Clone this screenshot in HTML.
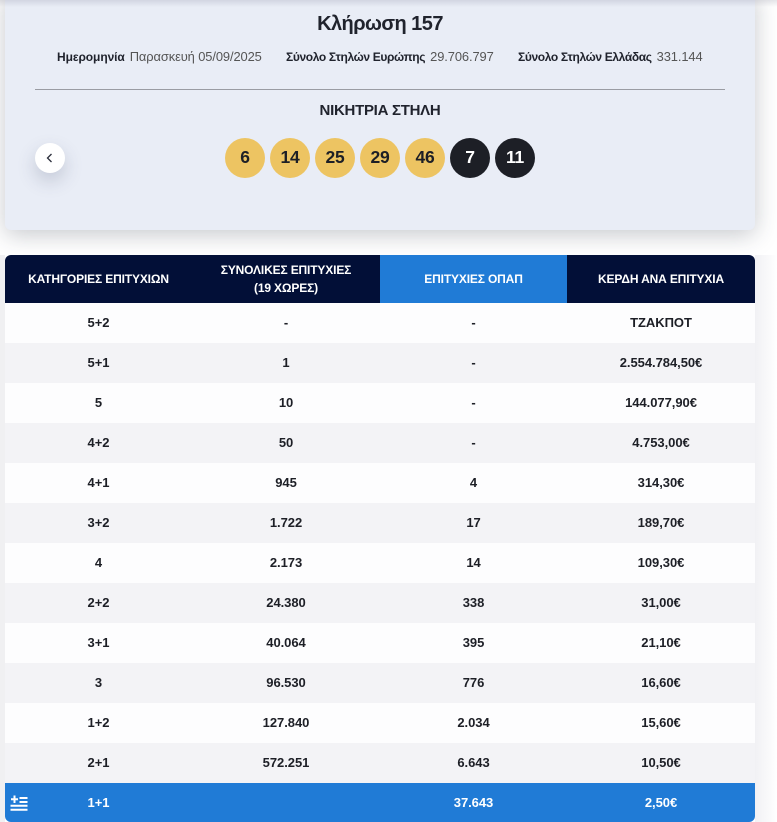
<!DOCTYPE html>
<html lang="el">
<head>
<meta charset="utf-8">
<title>Κλήρωση 157</title>
<style>
html,body{margin:0;padding:0;background:#fff;}
body{width:777px;height:822px;overflow:hidden;position:relative;font-family:"Liberation Sans",Arial,sans-serif;color:#1f2129;}
.card{position:absolute;left:5px;top:-10px;width:750px;height:240px;background:#e9edf6;border-radius:6px;box-shadow:0 5px 24px rgba(40,45,60,.26);}
.topfade{position:absolute;left:0;top:0;width:777px;height:7px;background:linear-gradient(180deg,rgba(70,70,100,.14),rgba(70,70,100,0));}
.abs{position:absolute;white-space:nowrap;}
h1{position:absolute;left:5px;width:750px;top:12px;margin:0;text-align:center;font-size:20px;line-height:24px;font-weight:700;color:#20232d;letter-spacing:-.55px;}
.meta{top:49px;font-size:12.9px;line-height:16px;color:#555;letter-spacing:-.1px;}
.meta b{color:#20232d;margin-right:5px;font-size:12px;letter-spacing:-.36px;}
.rule{position:absolute;left:35px;top:89px;width:690px;height:1px;background:#9a9ca3;}
h2{position:absolute;left:5px;width:750px;top:102px;margin:0;text-align:center;font-size:15px;line-height:18px;font-weight:700;color:#20232d;letter-spacing:-.28px;}
.ball{position:absolute;top:138px;width:40px;height:40px;border-radius:50%;text-align:center;line-height:39px;font-size:17.5px;font-weight:700;background:#edc462;color:#1d1f26;letter-spacing:-.2px;}
.ball.k{background:#1d1f26;color:#fff;}
.back{position:absolute;left:35px;top:143px;width:30px;height:30px;border-radius:50%;background:#fff;box-shadow:0 8px 18px rgba(60,70,100,.22);}
.tblwrap{position:absolute;left:5px;top:255px;width:750px;height:567px;border-radius:6px;overflow:hidden;}
.shade{position:absolute;left:755px;top:255px;width:22px;height:567px;background:linear-gradient(90deg,#f1f1f4,#fbfbfc 75%,#fff);}
.shadel{position:absolute;left:0;top:255px;width:5px;height:567px;background:#f0f0f2;}
table{border-collapse:collapse;table-layout:fixed;width:750px;}
th{height:48px;padding:0;background:#020f37;color:#fff;font-size:12px;line-height:18px;font-weight:700;text-align:center;letter-spacing:-.15px;}
th.o{background:#207bd6;}
td{box-sizing:border-box;height:40px;padding:0 0 2px;text-align:center;font-size:13px;font-weight:700;color:#1d1f26;background:#fdfdfe;letter-spacing:-.05px;}
tr.g td{background:#f3f3f6;}
tr.t td{background:#207bd6;color:#fff;height:39px;padding:0;}
.flag{position:absolute;left:10px;top:795px;width:18px;height:16px;}
</style>
</head>
<body>
<div class="card"></div>
<div class="topfade"></div>
<h1>Κλήρωση 157</h1>
<div class="abs meta" style="left:57px"><b style="letter-spacing:-.08px">Ημερομηνία</b>Παρασκευή 05/09/2025</div>
<div class="abs meta" style="left:286px"><b>Σύνολο Στηλών Ευρώπης</b>29.706.797</div>
<div class="abs meta" style="left:518px"><b>Σύνολο Στηλών Ελλάδας</b>331.144</div>
<div class="rule"></div>
<h2>ΝΙΚΗΤΡΙΑ ΣΤΗΛΗ</h2>
<div class="back"><svg width="30" height="30" viewBox="0 0 30 30"><path d="M16.5 11 L12.5 15 L16.5 19" fill="none" stroke="#2a2d3a" stroke-width="1.3"/></svg></div>
<div class="ball" style="left:225px">6</div>
<div class="ball" style="left:270px">14</div>
<div class="ball" style="left:315px">25</div>
<div class="ball" style="left:360px">29</div>
<div class="ball" style="left:405px">46</div>
<div class="ball k" style="left:450px">7</div>
<div class="ball k" style="left:495px">11</div>

<div class="shadel"></div>
<div class="shade"></div>
<div class="tblwrap">
<table>
<colgroup><col style="width:187px"><col style="width:188px"><col style="width:187px"><col style="width:188px"></colgroup>
<tr><th>ΚΑΤΗΓΟΡΙΕΣ ΕΠΙΤΥΧΙΩΝ</th><th>ΣΥΝΟΛΙΚΕΣ ΕΠΙΤΥΧΙΕΣ<br>(19 ΧΩΡΕΣ)</th><th class="o">ΕΠΙΤΥΧΙΕΣ ΟΠΑΠ</th><th>ΚΕΡΔΗ ΑΝΑ ΕΠΙΤΥΧΙΑ</th></tr>
<tr><td>5+2</td><td>-</td><td>-</td><td>ΤΖΑΚΠΟΤ</td></tr>
<tr class="g"><td>5+1</td><td>1</td><td>-</td><td>2.554.784,50€</td></tr>
<tr><td>5</td><td>10</td><td>-</td><td>144.077,90€</td></tr>
<tr class="g"><td>4+2</td><td>50</td><td>-</td><td>4.753,00€</td></tr>
<tr><td>4+1</td><td>945</td><td>4</td><td>314,30€</td></tr>
<tr class="g"><td>3+2</td><td>1.722</td><td>17</td><td>189,70€</td></tr>
<tr><td>4</td><td>2.173</td><td>14</td><td>109,30€</td></tr>
<tr class="g"><td>2+2</td><td>24.380</td><td>338</td><td>31,00€</td></tr>
<tr><td>3+1</td><td>40.064</td><td>395</td><td>21,10€</td></tr>
<tr class="g"><td>3</td><td>96.530</td><td>776</td><td>16,60€</td></tr>
<tr><td>1+2</td><td>127.840</td><td>2.034</td><td>15,60€</td></tr>
<tr class="g"><td>2+1</td><td>572.251</td><td>6.643</td><td>10,50€</td></tr>
<tr class="t"><td>1+1</td><td></td><td>37.643</td><td>2,50€</td></tr>
</table>
</div>
<svg class="flag" viewBox="0 0 18 16"><g fill="none" stroke="#fff" stroke-width="2"><path d="M0.5 14.8H17.5M0.5 10.8H17.5M9.5 7H17.5M9.5 3H17.5M1 4.2H8M4.5 0.5V8"/></g></svg>
</body>
</html>
